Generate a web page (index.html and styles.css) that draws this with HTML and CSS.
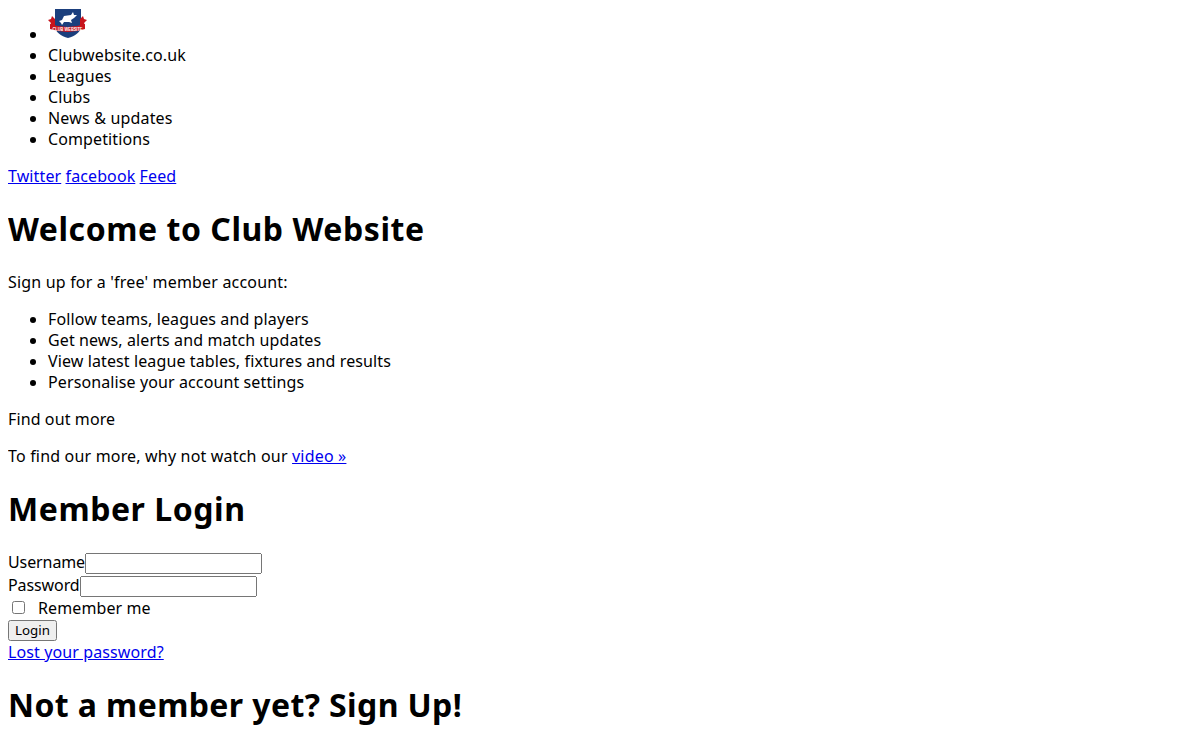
FILE: index.html
```html
<!DOCTYPE html>
<html lang="en">
<head>
<meta charset="utf-8">
<title>Club Website</title>
<link rel="stylesheet" href="styles.css">
</head>
<body>
<ul class="nav">
<li><svg class="logo" width="40" height="32" viewBox="0 0 40 32"><path d="M7 1h26v17c0 6-6 10-13 12C13 28 7 24 7 18z" fill="#1b3f7d"/><path d="M0 12l3-1 1-3 3 3v9l-3 0-2-3 1-2zM39 12l-3-1-1-3-3 3v9l3 0 2-3-1-2z" fill="#c8141c"/><path d="M2 16q17.500 6 35 0l0 5q-17.500 6-35 0z" fill="#c8141c"/><path d="M11 13l3-1 2-4 7-1 2-3 1 3 3 0-3 3-3 2 1 3-3-1-5 0-2 3-1-2z" fill="#fff"/><text x="19.500" y="22.500" class="logo-text" text-anchor="middle" textLength="30" lengthAdjust="spacingAndGlyphs">CLUB WEBSITE</text></svg></li>
<li>Clubwebsite.co.uk</li>
<li>Leagues</li>
<li>Clubs</li>
<li class="wide">News &amp; updates</li>
<li>Competitions</li>
</ul>
<p><a href="#">Twitter</a> <a href="#">facebook</a> <a href="#">Feed</a></p>
<h1>Welcome to Club Website</h1>
<p class="wide">Sign up for a 'free' member account:</p>
<ul>
<li>Follow teams, leagues and players</li>
<li>Get news, alerts and match updates</li>
<li>View latest league tables, fixtures and results</li>
<li>Personalise your account settings</li>
</ul>
<p>Find out more</p>
<p class="wide">To find our more, why not watch our <a href="#">video »</a></p>
<h1>Member Login</h1>
<form>
<div class="row"><label class="tight">Username</label><input type="text"></div>
<div class="row"><label class="tight">Password</label><input type="text"></div>
<div class="row-check"><input type="checkbox" class="check"><label>Remember me</label></div>
<div class="row-btn"><button type="button">Login</button></div>
<div><a href="#">Lost your password?</a></div>
</form>
<h1 class="h-tight">Not a member yet? Sign Up!</h1>
</body>
</html>
```
FILE: styles.css
```css
html, body { overflow: hidden; }
body { font-family: "Noto Sans", "DejaVu Sans", sans-serif; font-size: 16px; line-height: 21px; color: #000; letter-spacing: 0.11px; }
ul { margin: 16px 0; padding-left: 40px; }
.nav { margin-top: 0; }
p { margin: 16px 0; }
.wide { letter-spacing: 0.18px; }
.tight { letter-spacing: -0.1px; }
h1 { font-size: 32px; line-height: 43px; margin: 20px 0 22px; letter-spacing: 0.55px; }
.h-tight { letter-spacing: 0.39px; }
.row { height: 23px; }
.row-check { height: 22px; }
.row-btn { height: 22px; }
input[type=text] { width: 177px; height: 21px; box-sizing: border-box; margin: 0; }
.check { margin: 3px 13px 3px 4px; }
button { display: block; width: 49px; height: 21px; padding: 0; font-family: "Noto Sans", sans-serif; font-size: 13.33px; line-height: 17px; letter-spacing: 0; }
.logo { display: inline-block; vertical-align: baseline; }
.logo-text { font-family: "Liberation Sans", sans-serif; font-size: 4.500px; font-weight: 700; fill: #fff; letter-spacing: 0; }
```
